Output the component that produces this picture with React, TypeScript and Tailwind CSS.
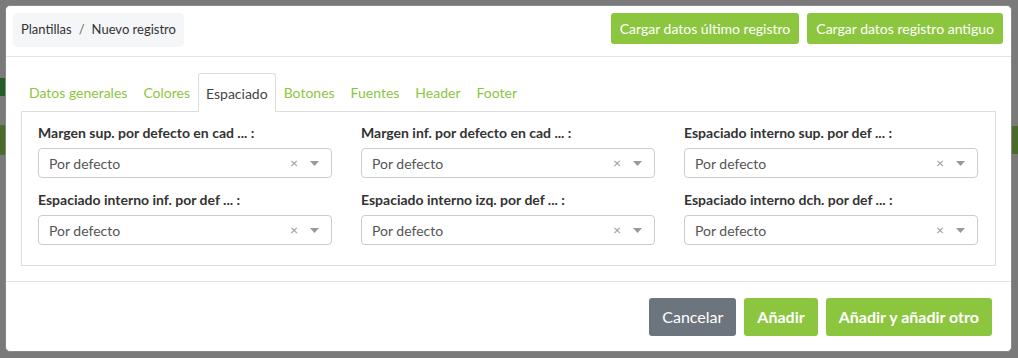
import { useState } from "react";

const tabs = ["Datos generales", "Colores", "Espaciado", "Botones", "Fuentes", "Header", "Footer"];

const fields = [
  "Margen sup. por defecto en cad ... :",
  "Margen inf. por defecto en cad ... :",
  "Espaciado interno sup. por def ... :",
  "Espaciado interno inf. por def ... :",
  "Espaciado interno izq. por def ... :",
  "Espaciado interno dch. por def ... :",
];

function SelectBox() {
  return (
    <div className="flex h-[30px] items-center rounded border border-[#cccccc] bg-white pl-[10px] pr-[12px] text-[14px] text-[#555]">
      <span className="flex-1">Por defecto</span>
      <span className="mr-[12px] text-[14px] leading-none text-[#999]">×</span>
      <svg width="9" height="5" viewBox="0 0 9 5">
        <path d="M0 0 L9 0 L4.5 5 Z" fill="#999" />
      </svg>
    </div>
  );
}

export default function App() {
  const [active, setActive] = useState("Espaciado");

  return (
    <div
      className="relative h-[358px] w-[1018px] overflow-hidden bg-[#7a7a7a] p-[5px] pr-[6px]"
      style={{ fontFamily: "Lato, 'Open Sans', sans-serif" }}
    >
      {/* page behind the overlay */}
      <div className="absolute left-0 top-[78px] h-[18px] w-[5px] bg-[#245c2a]" />
      <div className="absolute left-0 top-[125px] h-[30px] w-[5px] bg-[#4a6b2a]" />
      <div className="absolute right-0 top-[126px] h-[28px] w-[6px] bg-[#4a6b2a]" />

      <div className="relative flex h-[347px] flex-col rounded-[5px] border border-[#888] bg-white">
        {/* header */}
        <div className="flex h-[51px] items-start justify-between border-b border-[#e3e3e3] px-[7px] pt-[7px]">
          <div className="flex h-[34px] items-center rounded-[5px] bg-[#f5f6f7] px-[8px] text-[13px] text-[#333]">
            Plantillas <span className="px-[7px] text-[#666]">/</span> Nuevo registro
          </div>
          <div className="flex gap-[8px] pr-[1px]">
            <button className="h-[31px] rounded-[3px] bg-[#8cc63f] px-[9px] text-[14px] text-white">
              Cargar datos último registro
            </button>
            <button className="h-[31px] rounded-[3px] bg-[#8cc63f] px-[9px] text-[14px] text-white">
              Cargar datos registro antiguo
            </button>
          </div>
        </div>

        {/* body */}
        <div className="flex-1 border-b border-[#e3e3e3] px-[15px] pt-[16px]">
          <div className="flex h-[38px] items-end">
            {tabs.map((t) =>
              t === active ? (
                <div
                  key={t}
                  className="relative -mb-px flex h-[39px] items-center rounded-t-[3px] border border-b-0 border-[#dddddd] bg-white px-[7px] text-[14px] text-[#444]"
                >
                  {t}
                </div>
              ) : (
                <button
                  key={t}
                  onClick={() => setActive(t)}
                  className="flex h-[38px] items-center px-[8px] text-[14px] text-[#8cc63f]"
                >
                  {t}
                </button>
              )
            )}
          </div>
          <div className="border border-[#dddddd] pb-[20px] pl-[16px] pr-[17px] pt-[11px]">
            <div className="grid grid-cols-3 gap-x-[29px] gap-y-[12px]">
              {fields.map((f) => (
                <div key={f}>
                  <div className="mb-[5px] h-[20px] text-[14px] font-bold leading-[20px] text-[#333]">{f}</div>
                  <SelectBox />
                </div>
              ))}
            </div>
          </div>
        </div>

        {/* footer */}
        <div className="flex h-[69px] items-center justify-end gap-[8px] pr-[19px]">
          <button className="h-[38px] rounded-[3px] bg-[#6c757d] px-[13px] text-[16px] text-white">Cancelar</button>
          <button className="h-[38px] rounded-[3px] bg-[#8cc63f] px-[13px] text-[16px] font-bold text-white">Añadir</button>
          <button className="h-[38px] rounded-[3px] bg-[#8cc63f] px-[13px] text-[16px] font-bold text-white">
            Añadir y añadir otro
          </button>
        </div>
      </div>
    </div>
  );
}
